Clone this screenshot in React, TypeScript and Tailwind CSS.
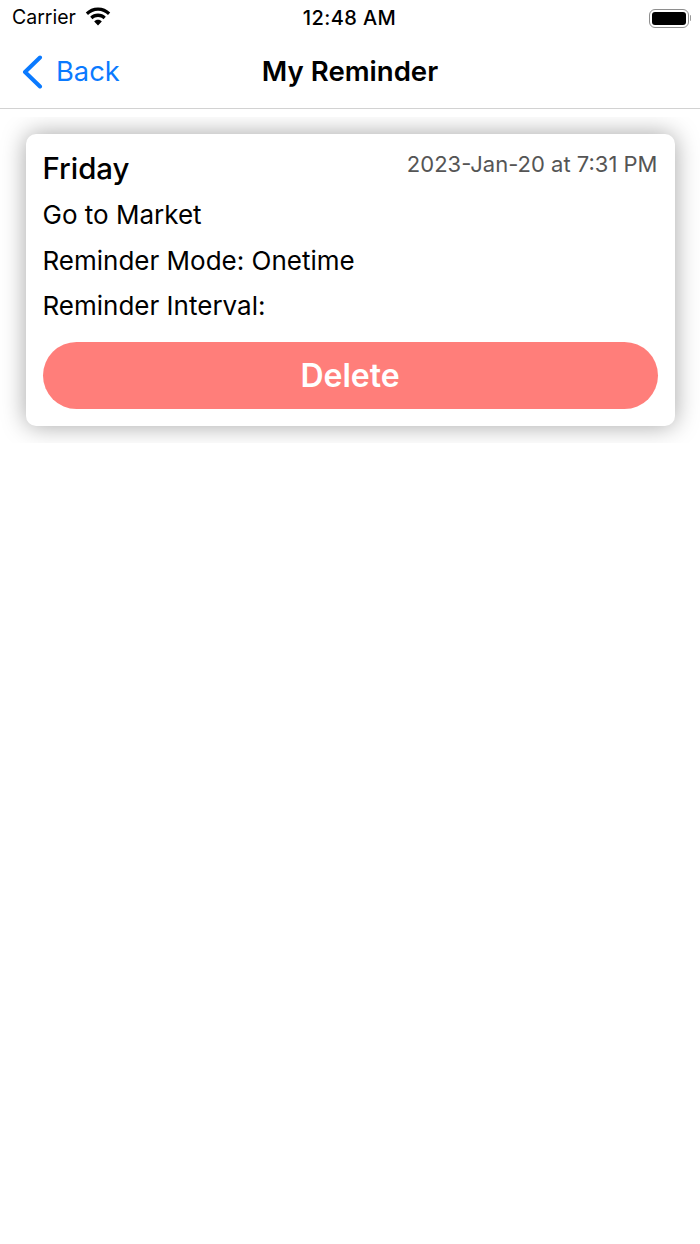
import React from 'react';

const WifiIcon = () => (
  <svg width="26" height="19" viewBox="0 0 26 19" fill="#000" className="mt-[-3px]">
    <path d="M13 0.5C8.2 0.5 3.9 2.4 0.8 5.5L3 8C5.6 5.4 9.1 3.8 13 3.8s7.4 1.6 10 4.2l2.2-2.5C22.1 2.4 17.8 0.5 13 0.5z" />
    <path d="M13 6.6c-3 0-5.800 1.200-7.800 3.200l2.300 2.500C8.900 10.900 10.900 10 13 10s4.100 0.900 5.500 2.300l2.300-2.500C18.800 7.800 16 6.600 13 6.600z" />
    <path d="M13 12.800c-1.500 0-2.900 0.600-3.800 1.600L13 18.500l3.800-4.100c-0.900-1-2.300-1.600-3.800-1.600z" />
  </svg>
);

const BatteryIcon = () => (
  <div className="flex items-center gap-[1px]">
    <div className="w-[40px] h-[19px] rounded-[6px] border-[1.5px] border-[#8e8e8e] p-[2px]">
      <div className="w-full h-full rounded-[3px] bg-black" />
    </div>
    <div className="w-[1.5px] h-[6px] rounded-r-sm bg-[#9a9a9a]" />
  </div>
);

const StatusBar = () => (
  <div className="h-[36px] flex items-center justify-between pl-[12px] pr-[9px] text-black">
    <div className="flex items-center gap-[9px] w-[150px]">
      <span className="text-[19.500px] leading-none">Carrier</span>
      <WifiIcon />
    </div>
    <span className="text-[20px] leading-none font-medium tracking-[0.4px]">12:48 AM</span>
    <div className="w-[154px] flex justify-end">
      <BatteryIcon />
    </div>
  </div>
);

const NavBar = () => (
  <div className="h-[73px] border-b border-[#d2d2d2] flex items-center justify-between pl-[22px]">
    <div className="flex items-center gap-[13px] w-[150px] text-[#0a7aff]">
      <svg width="21" height="34" viewBox="0 0 21 34" fill="none" stroke="currentColor" strokeWidth="4" strokeLinecap="round" strokeLinejoin="round">
        <path d="M18 2.500L3 17l15 14.500" />
      </svg>
      <span className="text-[27.300px] leading-none">Back</span>
    </div>
    <span className="text-[27.600px] leading-none font-semibold text-black">My Reminder</span>
    <div className="w-[172px]" />
  </div>
);

const ReminderCard = () => (
  <div className="bg-white rounded-[10px] shadow-[0_0_24px_rgba(0,0,0,0.36)] px-[17px] pt-[15px] pb-[17px]">
    <div className="flex justify-between items-start">
      <span className="text-[29.400px] leading-[40px] font-[450] text-black">Friday</span>
      <span className="text-[22px] leading-[30px] text-[#555555]">2023-Jan-20 at 7:31 PM</span>
    </div>
    <div className="text-[26px] leading-[45.500px] text-black mt-[3.500px]">
      <div>Go to Market</div>
      <div>Reminder Mode: Onetime</div>
      <div>Reminder Interval:</div>
    </div>
    <button className="mt-[13.500px] w-full h-[67px] rounded-full bg-[#ff7e7a] text-white text-[32px] font-semibold">
      Delete
    </button>
  </div>
);

export default function App() {
  return (
    <div className="w-[700px] h-[1244px] bg-white font-['Inter','Liberation_Sans',sans-serif]">
      <StatusBar />
      <NavBar />
      <div className="mt-[8px] overflow-hidden px-[25.500px] pt-[16.500px] pb-[17px]">
        <ReminderCard />
      </div>
    </div>
  );
}
